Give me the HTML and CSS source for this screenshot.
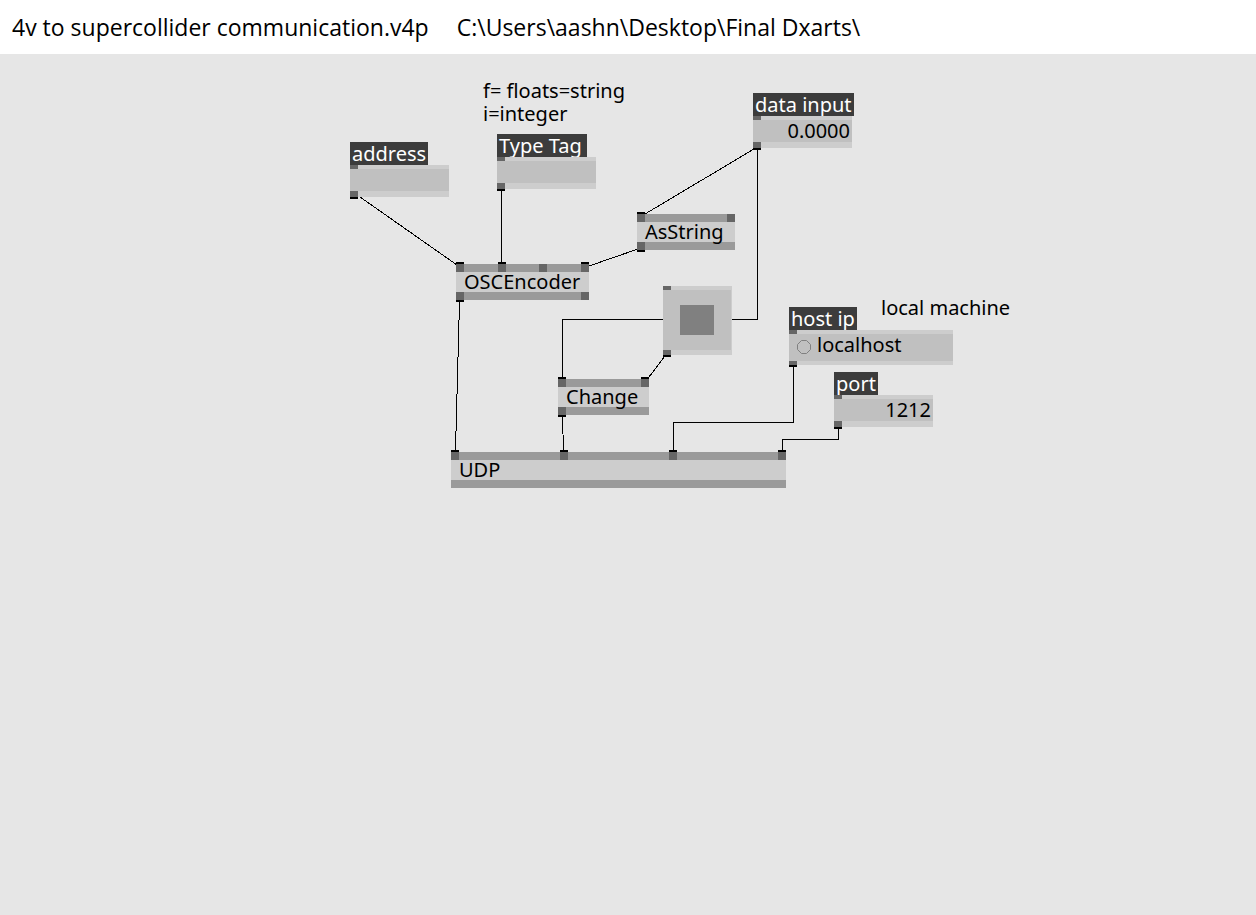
FILE: index.html
```html
<!DOCTYPE html>
<html lang="en">
<head>
<meta charset="utf-8">
<title>4v to supercollider communication.v4p</title>
<link rel="stylesheet" href="styles.css">
</head>
<body>
<header class="titlebar">
  <h1 class="file">4v to supercollider communication.v4p</h1>
  <span class="path">C:\Users\aashn\Desktop\Final Dxarts\</span>
</header>
<main class="patch">
  <svg class="wires" aria-hidden="true">
    <path d="M360 143L457 211"/>
    <path d="M501.500 137V208"/>
    <path d="M754 95L645 160"/>
    <path d="M638 195L589 212"/>
    <path d="M757.500 96V265.500H562.500V323"/>
    <path d="M665 302L649 323"/>
    <path d="M459.500 248L455.500 396"/>
    <path d="M562.500 363L563.500 396"/>
    <path d="M793.500 313V368.500H673.500V396"/>
    <path d="M838.500 375V385.500H782.500V396"/>
  </svg>

  <p class="comment note-types">f= floats=string<br>i=integer</p>
  <p class="comment note-host">local machine</p>

  <section class="iobox at-address">
    <label class="caption" for="address">address</label>
    <div class="box"><i class="pin in"></i><input class="field" id="address" type="text"><i class="pin out"></i></div>
  </section>
  <section class="iobox at-type">
    <label class="caption" for="type">Type Tag</label>
    <div class="box"><i class="pin in"></i><input class="field" id="type" type="text"><i class="pin out"></i></div>
  </section>
  <section class="iobox at-data">
    <label class="caption" for="data">data input</label>
    <div class="box"><i class="pin in"></i><input class="field number" id="data" type="text" value="0.0000"><i class="pin out"></i></div>
  </section>
  <section class="iobox at-host">
    <label class="caption" for="host">host ip</label>
    <div class="box wide"><i class="pin in"></i>
      <div class="entry">
        <svg class="ring" viewBox="0 0 14 14" aria-hidden="true"><path d="M4.500 .5H9.500L13.500 4.500V9.500L9.500 13.500H4.500L.5 9.500V4.500Z"/></svg>
        <input class="field" id="host" type="text" value="localhost">
      </div>
      <i class="pin out"></i></div>
  </section>
  <section class="iobox at-port">
    <label class="caption" for="port">port</label>
    <div class="box"><i class="pin in"></i><input class="field number" id="port" type="text" value="1212"><i class="pin out"></i></div>
  </section>

  <section class="node at-asstring">
    <div class="pins top"><i class="pin linked"></i><i class="pin"></i></div>
    <span class="name">AsString</span>
    <div class="pins bottom"><i class="pin linked"></i></div>
  </section>
  <section class="node at-osc">
    <div class="pins top"><i class="pin linked"></i><i class="pin linked"></i><i class="pin"></i><i class="pin linked"></i></div>
    <span class="name">OSCEncoder</span>
    <div class="pins bottom"><i class="pin linked"></i><i class="pin"></i></div>
  </section>
  <section class="node at-change">
    <div class="pins top"><i class="pin linked"></i><i class="pin linked"></i></div>
    <span class="name">Change</span>
    <div class="pins bottom"><i class="pin linked"></i></div>
  </section>
  <section class="node at-udp">
    <div class="pins top"><i class="pin linked"></i><i class="pin linked"></i><i class="pin linked"></i><i class="pin linked"></i></div>
    <span class="name">UDP</span>
    <div class="pins bottom"></div>
  </section>

  <div class="box toggle at-toggle">
    <i class="pin in"></i>
    <button class="bang" type="button" aria-label="Bang"><span class="core"></span></button>
    <i class="pin out"></i>
  </div>
</main>
</body>
</html>
```
FILE: styles.css
```css
* { box-sizing: border-box; }

body {
  margin: 0;
  min-height: 100vh;
  display: flex;
  flex-direction: column;
  background: #e6e6e6;
  color: #000;
  font: 20px/23px "Noto Sans", sans-serif;
}

.titlebar {
  display: flex;
  gap: 28px;
  padding: 11px 12px;
  background: #fff;
  font: 23px/32px "Open Sans", sans-serif;
  white-space: nowrap;
}
.file { margin: 0; font: inherit; }

/* Free canvas: every node carries its own place on it. */
.patch { position: relative; flex: 1; }
.wires {
  position: absolute;
  inset: 0;
  width: 100%;
  height: 100%;
  fill: none;
  stroke: #000;
  shape-rendering: crispEdges;
}

.comment, .iobox, .node, .toggle { position: absolute; margin: 0; }
.comment { white-space: nowrap; }

.note-types  { left: 483px; top: 25px; }
.note-host   { left: 881px; top: 242px; }
.at-address  { left: 350px; top: 88px; }
.at-type     { left: 497px; top: 80px; }
.at-data     { left: 753px; top: 39px; }
.at-host     { left: 789px; top: 253px; }
.at-port     { left: 834px; top: 318px; }
.at-asstring { left: 637px; top: 160px; width: 98px; }
.at-osc      { left: 456px; top: 210px; width: 133px; }
.at-change   { left: 558px; top: 325px; width: 91px; }
.at-udp      { left: 451px; top: 398px; width: 335px; }
.at-toggle   { left: 663px; top: 232px; }

.pin { display: block; width: 8px; height: 8px; background: #666; }

/* IO boxes */
.iobox { display: flex; flex-direction: column; align-items: flex-start; }
.caption {
  height: 23px;
  padding: 0 2px;
  background: #3c3c3c;
  color: #fff;
  white-space: nowrap;
}
.at-type .caption { min-width: 90px; }
.box {
  display: flex;
  flex-direction: column;
  width: 99px;
  background: #cdcdcd;
}
.pin.in { height: 4px; }
.pin.out { height: 6px; box-shadow: 0 2px #000; }
.field {
  width: 100%;
  height: 22px;
  padding: 0 2px;
  border: 0;
  border-radius: 0;
  background: #c0c0c0;
  color: #000;
  font: inherit;
  line-height: 22px;
}
.number { text-align: right; }
.wide { width: 164px; }
.wide .pin.out { height: 4px; }
.entry {
  display: flex;
  align-items: flex-start;
  height: 27px;
  padding-left: 8px;
  background: #c0c0c0;
}
.entry .field { height: 20px; line-height: 20px; }
.ring {
  flex: none;
  width: 14px;
  height: 14px;
  margin: 6px 4px 0 0;
  fill: none;
  stroke: #808080;
}

/* Function nodes */
.node { display: flex; flex-direction: column; background: #cdcdcd; }
.pins {
  display: flex;
  justify-content: space-between;
  height: 8px;
  background: #9a9a9a;
}
/* Descenders run over the lower pin bar. */
.name { z-index: 1; padding: 0 8px; line-height: 20px; }
.top .linked { box-shadow: 0 -2px #000; }
.bottom .linked { box-shadow: 0 2px #000; }

/* Bang button */
.toggle { width: 69px; }
.toggle .pin.out { height: 5px; }
.bang {
  display: grid;
  place-items: center;
  height: 60px;
  margin-right: 1px;
  padding: 0;
  border: 0;
  background: #c0c0c0;
}
.core { width: 34px; height: 30px; background: #808080; }
```
